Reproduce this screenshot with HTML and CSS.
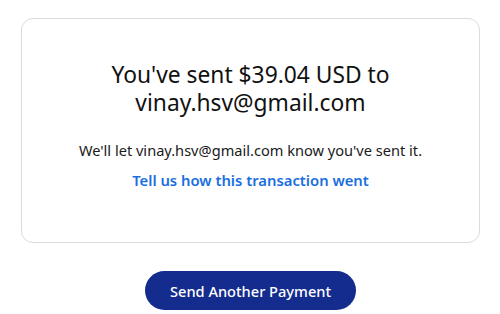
FILE: index.html
```html
<!DOCTYPE html>
<html>
<head>
<meta charset="utf-8">
<link rel="stylesheet" href="styles.css">
</head>
<body>
<main class="page">
  <section class="card">
    <h1 class="title">You've sent $39.04 USD to<br>vinay.hsv@gmail.com</h1>
    <p class="note">We'll let vinay.hsv@gmail.com know you've sent it.</p>
    <a class="link" href="#">Tell us how this transaction went</a>
  </section>
  <div class="actions">
    <button class="btn">Send Another Payment</button>
  </div>
</main>
</body>
</html>
```
FILE: styles.css
```css
html, body {
  margin: 0;
  padding: 0;
  background: #ffffff;
}
body {
  font-family: "Noto Sans", "Open Sans", sans-serif;
  color: #1a1a1a;
}
.page {
  width: 500px;
  padding: 18px 20px 0 21px;
  box-sizing: border-box;
}
.card {
  box-sizing: border-box;
  height: 225px;
  border: 1px solid #dedbd6;
  border-radius: 12px;
  display: flex;
  flex-direction: column;
  align-items: center;
  padding-top: 42px;
}
.title {
  margin: 0;
  font-size: 22.8px;
  font-weight: 400;
  line-height: 28px;
  text-align: center;
  color: #111;
}
.note {
  margin: 23px 0 0;
  font-size: 14.6px;
  line-height: 20px;
  color: #1a1a1a;
}
.link {
  margin-top: 10px;
  font-size: 14.8px;
  line-height: 20px;
  font-weight: 600;
  color: #1a6fe0;
  text-decoration: none;
}
.actions {
  display: flex;
  justify-content: center;
  padding-top: 28px;
}
.btn {
  width: 211px;
  height: 39px;
  border: none;
  border-radius: 20px;
  background: #142c8e;
  color: #fff;
  font-family: inherit;
  font-size: 14.6px;
  font-weight: 500;
}
```
